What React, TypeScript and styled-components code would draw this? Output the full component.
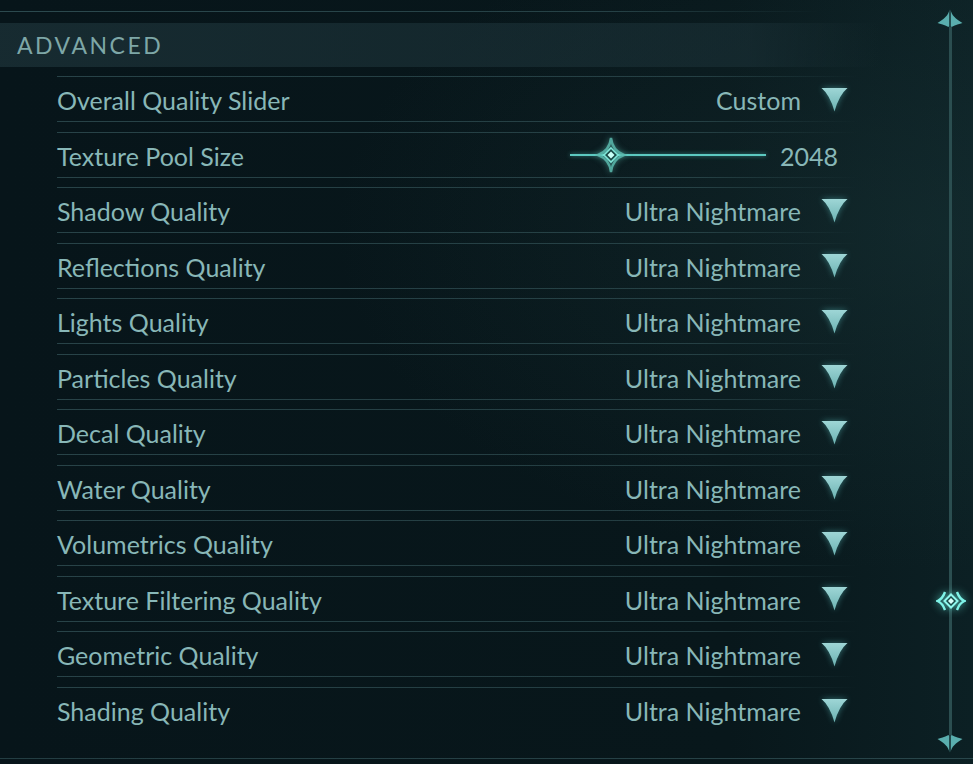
import styled, { createGlobalStyle } from "styled-components";

const GlobalStyle = createGlobalStyle`
  html, body {
    margin: 0;
    padding: 0;
    background: #08161a;
  }
  body {
    font-family: Lato, "Open Sans", sans-serif;
  }
`;

const Screen = styled.div`
  width: 973px;
  height: 764px;
  overflow: hidden;
  display: flex;
  flex-direction: column;
  background:
    radial-gradient(ellipse at 95% 30%, rgba(30, 60, 62, 0.35), transparent 45%),
    linear-gradient(to right, #07151a 0%, #08171b 75%, #0c2024 100%);
`;

const Body = styled.div`
  flex: 1;
  display: flex;
  flex-direction: row;
`;

const Main = styled.div`
  flex: 1;
  display: flex;
  flex-direction: column;
  padding-top: 11px;
`;

const TopRule = styled.div`
  height: 1px;
  width: 820px;
  background: linear-gradient(to right, rgba(80, 125, 130, 0.5), rgba(80, 125, 130, 0.4) 75%, transparent);
`;

const Header = styled.div`
  margin-top: 11px;
  height: 44px;
  width: 880px;
  display: flex;
  align-items: center;
  padding-left: 17px;
  box-sizing: border-box;
  background: linear-gradient(to right, rgba(28, 50, 56, 0.75), rgba(26, 48, 54, 0.6) 85%, transparent);
  color: #7ea7a7;
  font-size: 23px;
  letter-spacing: 2.5px;
`;

const List = styled.div`
  margin-top: 9px;
  width: 857px;
  padding-left: 57px;
  box-sizing: border-box;
  display: flex;
  flex-direction: column;
  gap: 9.5px;
`;

const Row = styled.div<{ $noBottom?: boolean }>`
  height: 46px;
  box-sizing: border-box;
  display: flex;
  flex-direction: row;
  align-items: center;
  padding-right: 9px;
  border-style: solid;
  border-width: 1px 0 ${(p) => (p.$noBottom ? "0" : "1px")} 0;
  border-image: linear-gradient(to right, rgba(85, 130, 135, 0.42), rgba(85, 130, 135, 0.35) 80%, transparent) 1;
  color: #88b7b7;
  font-size: 25px;
`;

const Label = styled.span`
  flex: 1;
  padding-top: 2px;
`;

const Value = styled.span`
  padding-top: 2px;
`;

const Arrow = styled.svg`
  width: 27px;
  height: 25px;
  margin-left: 20px;
  filter: drop-shadow(0 0 3px rgba(100, 210, 210, 0.45));
`;

const SliderBox = styled.div`
  display: flex;
  align-items: center;
  gap: 14px;
  padding-right: 10px;
`;

const Track = styled.div`
  position: relative;
  width: 196px;
  height: 2px;
  background: #5cc9c0;
  box-shadow: 0 0 4px rgba(90, 220, 210, 0.6);
`;

const Thumb = styled.svg`
  position: absolute;
  top: -18px;
  width: 32px;
  height: 38px;
  filter: drop-shadow(0 0 3px rgba(120, 240, 225, 0.5));
`;

const ScrollCol = styled.div`
  width: 46px;
  display: flex;
  flex-direction: column;
  align-items: center;
  padding-top: 9px;
  padding-bottom: 5px;
`;

const Cap = styled.svg`
  width: 26px;
  height: 18px;
  flex-shrink: 0;
`;

const Rail = styled.div`
  position: relative;
  flex: 1;
  width: 3px;
  background: #2b4e50;
`;

const ScrollThumb = styled.svg`
  position: absolute;
  left: -13px;
  width: 30px;
  height: 24px;
  filter: drop-shadow(0 0 4px rgba(110, 255, 240, 0.7));
`;

const BottomRule = styled.div`
  height: 1px;
  margin-bottom: 5px;
  background: linear-gradient(to right, rgba(70, 110, 115, 0.45), rgba(70, 110, 115, 0.5));
`;

const DropArrow = () => (
  <Arrow viewBox="0 0 27 25">
    <defs>
      <linearGradient id="ag" x1="0" y1="0" x2="0" y2="1">
        <stop offset="0" stopColor="#9ed6d6" />
        <stop offset="1" stopColor="#6cb2b2" />
      </linearGradient>
    </defs>
    <path d="M0.5 1 H26.5 Q18 8 13.5 24.5 Q9 8 0.5 1 Z" fill="url(#ag)" />
  </Arrow>
);

const SliderThumb = ({ pct }: { pct: number }) => (
  <Thumb viewBox="0 0 32 38" style={{ left: `calc(${pct}% - 16px)` }}>
    <path
      d="M16 2 Q17.5 15 29 19 Q17.5 23 16 36 Q14.5 23 3 19 Q14.5 15 16 2 Z"
      fill="none"
      stroke="#5bb9ad"
      strokeWidth="2.4"
      opacity="0.85"
    />
    <path d="M16 12 L23 19 L16 26 L9 19 Z" fill="#1a4a47" stroke="#7fe6d8" strokeWidth="1.6" />
    <path d="M16 15.5 L19.5 19 L16 22.5 L12.5 19 Z" fill="#c8fff6" />
  </Thumb>
);

const TopCap = ({ flip }: { flip?: boolean }) => (
  <Cap viewBox="0 0 26 18" style={flip ? { transform: "scaleY(-1)" } : undefined}>
    <path d="M12.3 0.5 C12 6 7 10 0.5 14 C3.5 15 7.5 15.8 11 17.8 L12.3 17.8 Z" fill="#5aaeae" />
    <path d="M13.7 0.5 C14 6 19 10 25.5 14 C22.5 15 18.5 15.8 15 17.8 L13.7 17.8 Z" fill="#5aaeae" />
  </Cap>
);

const ScrollKnob = ({ top }: { top: number }) => (
  <ScrollThumb viewBox="0 0 30 24" style={{ top: `${top}px` }}>
    <path d="M9 3 Q6.5 10 1.5 12 Q6.5 14 9 21" fill="none" stroke="#7ff3e8" strokeWidth="2.4" />
    <path d="M21 3 Q23.5 10 28.5 12 Q23.5 14 21 21" fill="none" stroke="#7ff3e8" strokeWidth="2.4" />
    <path d="M15 5.5 L21.5 12 L15 18.5 L8.5 12 Z" fill="#174a48" stroke="#8ff8ee" strokeWidth="2" />
    <path d="M15 9 L18 12 L15 15 L12 12 Z" fill="#d8fffa" />
  </ScrollThumb>
);

const settings = [
  "Shadow Quality",
  "Reflections Quality",
  "Lights Quality",
  "Particles Quality",
  "Decal Quality",
  "Water Quality",
  "Volumetrics Quality",
  "Texture Filtering Quality",
  "Geometric Quality",
  "Shading Quality",
];

export default function App() {
  return (
    <Screen>
      <GlobalStyle />
      <Body>
        <Main>
          <TopRule />
          <Header>ADVANCED</Header>
          <List>
            <Row>
              <Label>Overall Quality Slider</Label>
              <Value>Custom</Value>
              <DropArrow />
            </Row>
            <Row>
              <Label>Texture Pool Size</Label>
              <SliderBox>
                <Track>
                  <SliderThumb pct={21} />
                </Track>
                <Value>2048</Value>
              </SliderBox>
            </Row>
            {settings.map((name, i) => (
              <Row key={name} $noBottom={i === settings.length - 1}>
                <Label>{name}</Label>
                <Value>Ultra Nightmare</Value>
                <DropArrow />
              </Row>
            ))}
          </List>
        </Main>
        <ScrollCol>
          <TopCap />
          <Rail>
            <ScrollKnob top={562} />
          </Rail>
          <TopCap flip />
        </ScrollCol>
      </Body>
      <BottomRule />
    </Screen>
  );
}
